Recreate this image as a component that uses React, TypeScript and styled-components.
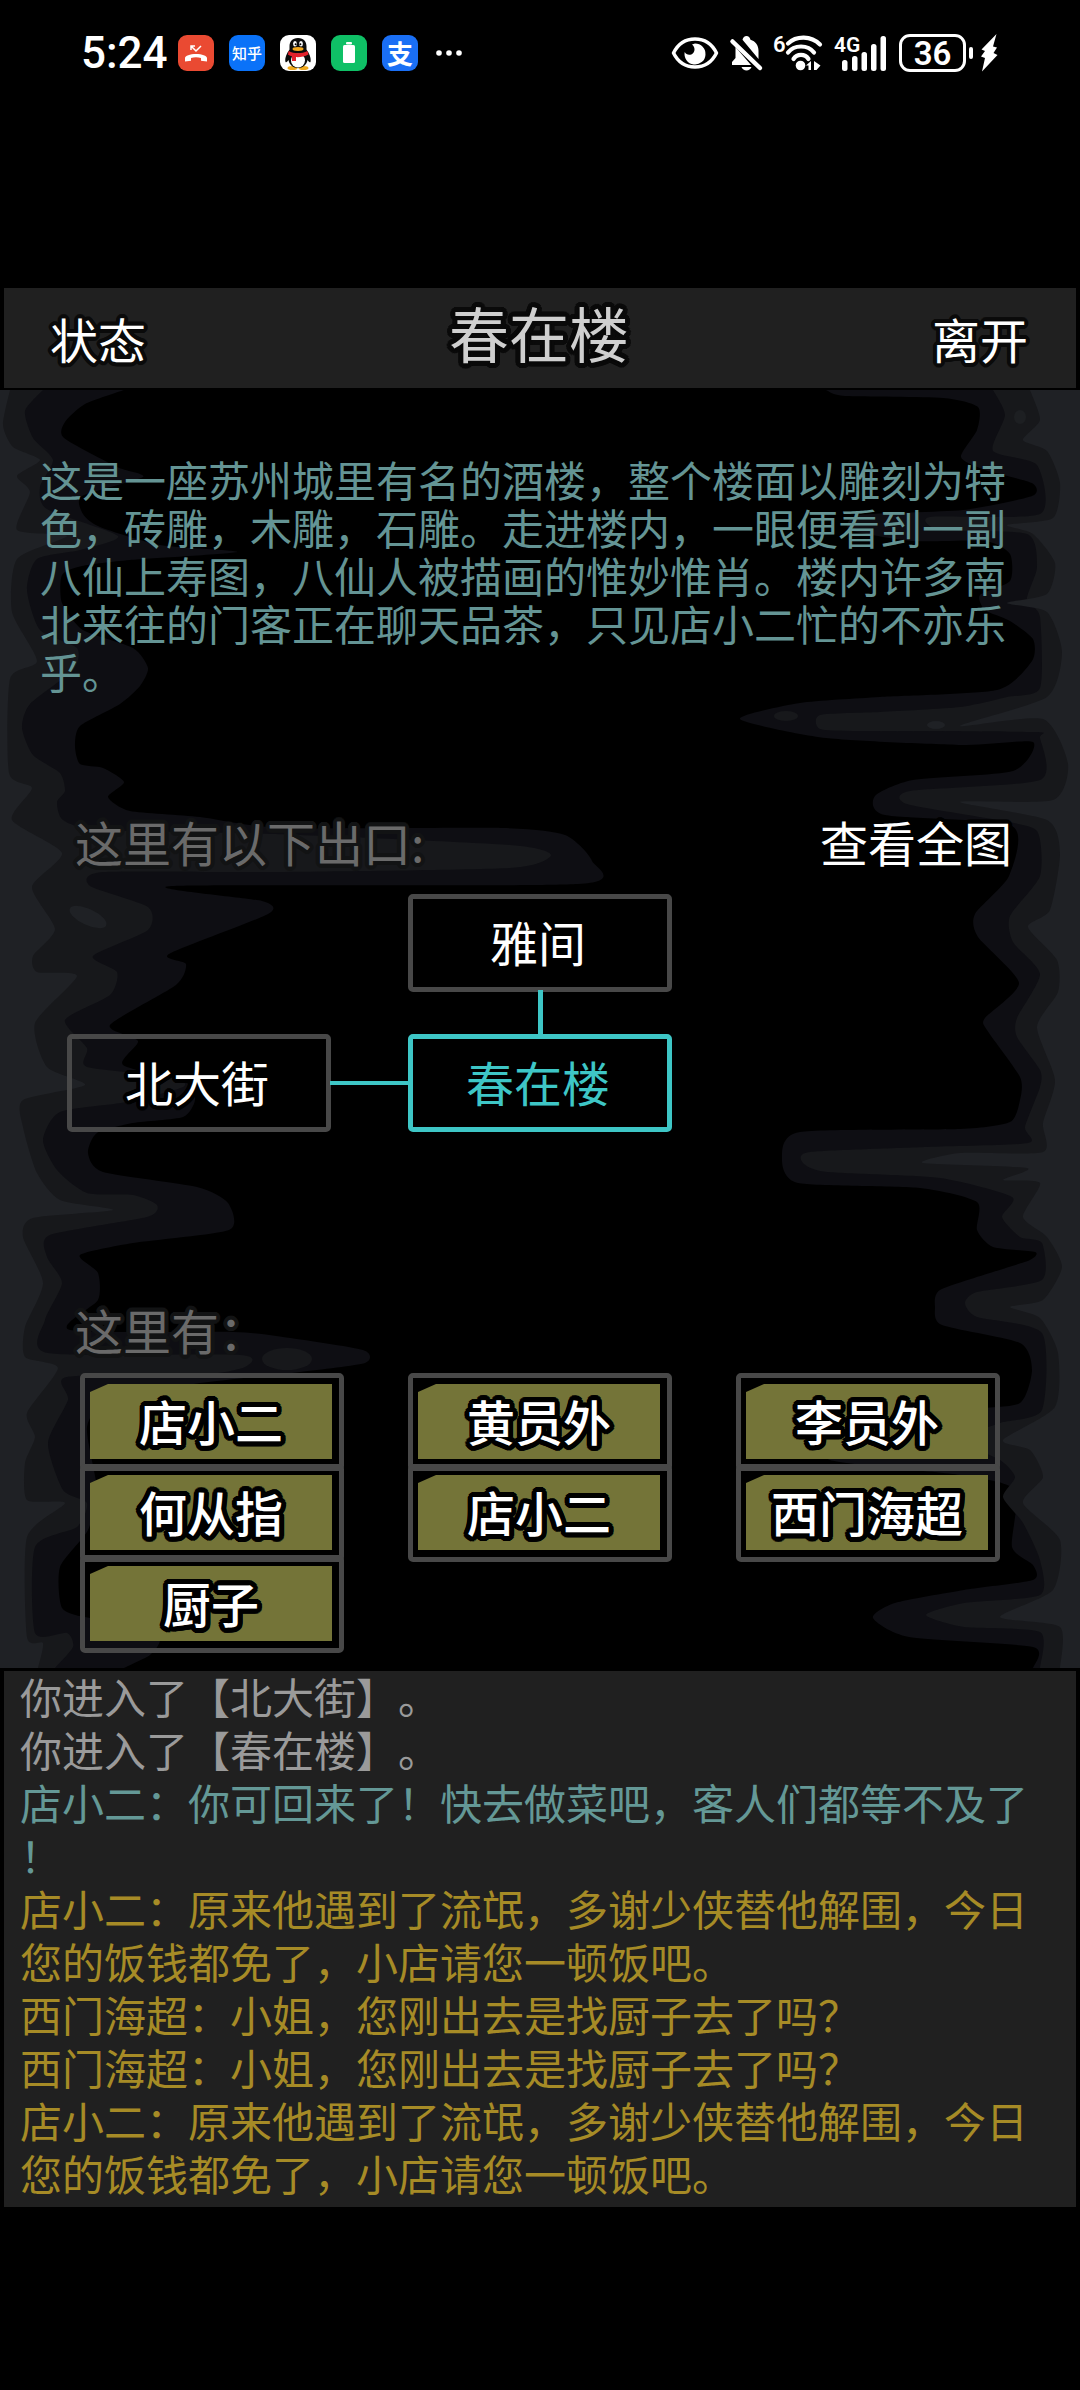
import React from 'react';
import styled, { createGlobalStyle, css } from 'styled-components';

const GlobalStyle = createGlobalStyle`
  *, *::before, *::after { box-sizing: border-box; }
  body {
    margin: 0;
    background: #000;
    color: #fff;
    font-family: 'Noto Sans CJK SC', sans-serif;
    text-spacing-trim: space-all;
  }
  button {
    margin: 0;
    padding: 0;
    border: 0;
    background: none;
    color: inherit;
    font: inherit;
    cursor: pointer;
  }
`;

const ring = (radius: number, colour: string) =>
  Array.from({ length: 20 }, (_, i) => {
    const a = (i / 20) * Math.PI * 2;
    return `${(Math.cos(a) * radius).toFixed(1)}px ${(Math.sin(a) * radius).toFixed(1)}px 0 ${colour}`;
  }).join(', ');

const outline = (colour: string, reach = 4) => css`
  text-shadow: ${ring(2, colour)}, ${ring(reach, colour)};
`;

const Screen = styled.div`
  min-height: 100vh;
  background: #000;
`;

/* ---------- status bar ---------- */

const StatusBar = styled.header`
  display: flex;
  align-items: center;
  justify-content: space-between;
  height: 106px;
  padding: 0 82px 0 81px;
  font-family: Roboto, sans-serif;
`;

const StatusGroup = styled.div<{ $gap: number }>`
  display: flex;
  align-items: center;
  gap: ${(p) => p.$gap}px;

  svg {
    overflow: visible;
  }
`;

const Clock = styled.time`
  width: 82px;
  font-size: 44px;
  font-weight: 500;
  line-height: 56px;
  white-space: nowrap;
`;

const AppBadge = styled.span<{ $bg: string }>`
  display: grid;
  place-items: center;
  width: 36px;
  height: 36px;
  border-radius: 9px;
  background: ${(p) => p.$bg};
  font-family: 'Noto Sans CJK SC', sans-serif;
  font-weight: 500;
  font-size: 15px;
  line-height: 36px;
`;

const BigBadge = styled(AppBadge)`
  font-size: 26px;
  font-weight: 700;
`;

const Battery = styled.span`
  display: flex;
  align-items: center;
  gap: 3px;
`;

const BatteryCell = styled.span`
  width: 67px;
  height: 38px;
  border: 3px solid #fff;
  border-radius: 11px;
  font-size: 33px;
  font-weight: 600;
  line-height: 33px;
  text-align: center;
`;

const BatteryTip = styled.span`
  width: 4px;
  height: 12px;
  margin-right: 4px;
  border-radius: 2px;
  background: #fff;
`;

const MissedCall = () => (
  <svg width="36" height="36" viewBox="0 0 36 36" fill="none">
    <path d="M7 25v-2c0-2 5-4 11-4s11 2 11 4v3.500l-6-.8v-2.600c-3-1-7-1-10 0v2.600l-6 .8z" fill="#fff" />
    <path d="M13 15v-4h4M13.500 11.500l4.500 4.500 5-5" stroke="#fff" strokeWidth="1.500" />
  </svg>
);

const Penguin = () => (
  <svg width="36" height="36" viewBox="0 0 36 36">
    <ellipse cx="12.500" cy="33" rx="5" ry="2" fill="#f0a81c" />
    <ellipse cx="23.500" cy="33" rx="5" ry="2" fill="#f0a81c" />
    <path d="M18 3c-6 0-8.500 4-8.500 8.500v3C7 18 4.500 23 5.500 27c.8 1 2-.5 3-2 .8 4.500 4.500 8 9.500 8s8.700-3.500 9.500-8c1 1.500 2.200 3 3 2 1-4-1.500-9-4-12.500v-3C26.500 7 24 3 18 3z" fill="#0b0b0b" />
    <ellipse cx="18" cy="25.500" rx="7" ry="7" fill="#fff" />
    <path d="M8.500 16c6 3 13 3 19 0l1 3.500c-4 2-8 2.800-12.500 2.600V26h-4v-4.500l-4-1.800z" fill="#e3202b" />
    <ellipse cx="15" cy="8.800" rx="1.900" ry="2.700" fill="#fff" />
    <ellipse cx="21" cy="8.800" rx="1.900" ry="2.700" fill="#fff" />
    <circle cx="15.600" cy="9.200" r="1" fill="#000" />
    <circle cx="20.400" cy="9.200" r="1" fill="#000" />
    <ellipse cx="18" cy="14" rx="5.500" ry="1.900" fill="#f5a81c" />
  </svg>
);

const BatteryApp = () => (
  <svg width="36" height="36" viewBox="0 0 36 36" fill="#fff">
    <rect x="15" y="7" width="6" height="2.500" rx="1" />
    <rect x="12" y="10" width="12" height="18" rx="1.500" />
  </svg>
);

const Dots = () => (
  <svg width="36" height="36" viewBox="0 0 36 36" fill="#fff">
    <circle cx="6" cy="18" r="2.800" />
    <circle cx="16" cy="18" r="2.800" />
    <circle cx="26" cy="18" r="2.800" />
  </svg>
);

const Eye = () => (
  <svg width="48" height="34" viewBox="0 0 48 34" fill="none">
    <path d="M2.500 17C7 8 15 3 24 3s17 5 21.500 14C41 26 33 31 24 31S7 26 2.500 17z" stroke="#fff" strokeWidth="3.500" strokeLinejoin="round" />
    <path d="M24 7.500a10.500 10.500 0 1 1-10.300 8.500c1 1.800 2.500 2.800 4.500 2.800 3 0 5.300-2.300 5.300-5.300 0-2-.9-3.700-2.500-4.900z" fill="#fff" />
  </svg>
);

const BellOff = () => (
  <svg width="33" height="36" viewBox="0 0 33 36">
    <path d="M12.500 4.800C13 2.500 14.500 1 16.500 1s3.500 1.500 4 3.800c5 1.500 8 5.500 8 11V24z" fill="#fff" />
    <path d="M5.500 12 21 30H2v-3l3.500-4z" fill="#fff" />
    <path d="M2.500 6.500 30 33" stroke="#fff" strokeWidth="4.500" strokeLinecap="round" />
    <path d="M11.500 32h10c-.8 2-2.800 3.500-5 3.500s-4.200-1.500-5-3.500z" fill="#fff" />
  </svg>
);

const Wifi = () => (
  <svg width="50" height="38" viewBox="0 0 50 38">
    <text x="-1" y="18" fontSize="22" fontWeight="600" fill="#fff">6</text>
    <g fill="none" stroke="#fff" strokeWidth="4.200" strokeLinecap="round">
      <path d="M14 9.500c8.500-8 23-8 32 1" />
      <path d="M14 18.500c6-8 20-8 26 0" />
      <path d="M19.500 25c3.500-5.500 11.500-5.500 15 0" />
    </g>
    <circle cx="26.500" cy="31.500" r="4.800" fill="#fff" />
    <path d="M37 27v9h-2.500v-4.500H32zM40 27l6.500 4.500L42.500 36H40z" fill="#fff" />
  </svg>
);

const Signal = () => (
  <svg width="53" height="38" viewBox="0 0 53 38">
    <text x="-1" y="18" fontSize="21" fontWeight="600" fill="#fff">4G</text>
    <g fill="#fff">
      <rect x="7" y="26" width="5.500" height="11" rx="2.500" />
      <rect x="17" y="22" width="5.500" height="15" rx="2.500" />
      <rect x="26.500" y="18" width="5.500" height="19" rx="2.500" />
      <rect x="36" y="10" width="5.500" height="27" rx="2.500" />
      <rect x="45.500" y="2" width="5.500" height="35" rx="2.500" />
    </g>
  </svg>
);

const Bolt = () => (
  <svg width="18" height="38" viewBox="0 0 18 38">
    <path d="M16.500 0 1.500 15.500 5 17 1 22.500l4 1.500L2 37.500 17.500 21l-4-2 3.500-5.500-4-1z" fill="#fff" />
  </svg>
);

/* ---------- title bar ---------- */

const TitleBar = styled.nav`
  display: grid;
  grid-template-columns: 1fr auto 1fr;
  align-items: center;
  height: 100px;
  margin: 182px 4px 2px;
  padding: 0 48px 0 46px;
  background: #202020;
`;

const TitleButton = styled.button<{ $end?: boolean }>`
  justify-self: ${(p) => (p.$end ? 'end' : 'start')};
  font-size: 48px;
  line-height: 64px;
  ${outline('#0a0a0a')}
`;

const Title = styled.h1`
  margin: 0;
  padding-bottom: 12px;
  color: #cfcfcf;
  font-family: 'AR PL UKai CN', KaiTi, STKaiti, 'Noto Sans CJK SC', sans-serif;
  font-size: 60px;
  font-weight: 400;
  line-height: 72px;
  ${outline('#0a0a0a', 5)}
`;

/* ---------- scene ---------- */

const Scene = styled.main`
  position: relative;
  padding: 65px 0 15px;
`;

const Backdrop = styled.svg`
  position: absolute;
  inset: 0;
  width: 100%;
  height: 100%;
`;

const Content = styled.div`
  position: relative;
`;

const Description = styled.p`
  margin: 0;
  padding: 0 60px 0 40px;
  color: #649494;
  font-size: 42px;
  line-height: 48px;
  line-break: anywhere;
`;

const SectionHead = styled.div<{ $space: number }>`
  display: flex;
  align-items: flex-start;
  justify-content: space-between;
  height: 60px;
  margin-top: ${(p) => p.$space}px;
  padding: 0 68px 0 75px;
  font-size: 48px;
  line-height: 54px;
`;

const SectionTitle = styled.h2`
  margin: 0;
  color: #6a6a6a;
  font: inherit;
  ${outline('#121314')}
`;

const MapButton = styled.button`
  ${outline('#000')}
`;

const ExitMap = styled.div`
  display: grid;
  grid-template-columns: 1fr 77px 1fr 77px 1fr;
  grid-template-rows: 98px 42px 98px;
  margin-top: 20px;
  padding: 0 67px;
`;

const Place = styled.button<{ $col: number; $row: number; $here?: boolean }>`
  grid-column: ${(p) => p.$col};
  grid-row: ${(p) => p.$row};
  padding: 0 4px 4px 0;
  border: 5px solid ${(p) => (p.$here ? '#3ec6c6' : '#484848')};
  border-radius: 5px;
  color: ${(p) => (p.$here ? '#3ec6c6' : '#fff')};
  font-size: 48px;
  line-height: 60px;
  ${outline('#000')}
`;

const Link = styled.span<{ $vertical?: boolean }>`
  place-self: center;
  background: #3ec6c6;
  ${(p) =>
    p.$vertical
      ? 'grid-column: 3; grid-row: 2; width: 5px; height: 46px;'
      : 'grid-column: 2; grid-row: 3; width: 80px; height: 4px;'}
`;

const People = styled.div`
  display: grid;
  grid-template-columns: repeat(3, 1fr);
  align-items: start;
  gap: 64px;
  margin-top: 11px;
  padding: 0 80px;
`;

const PeopleColumn = styled.div`
  display: flex;
  flex-direction: column;
`;

const Person = styled.button`
  height: 98px;
  padding: 6px 7px 7px 5px;
  border: 5px solid #484848;
  border-radius: 5px;

  & + & {
    margin-top: -7px;
  }
`;

const PersonName = styled.span`
  display: block;
  height: 75px;
  background: #747438;
  clip-path: polygon(18px 0, 100% 0, 100% 100%, 0 100%, 0 8px);
  font-size: 48px;
  font-weight: 500;
  line-height: 72px;
  ${outline('#000', 5)}
`;

/* ---------- message log ---------- */

const Log = styled.section`
  display: flex;
  flex-direction: column;
  margin: 3px 4px 0;
  padding: 0 16px 8px;
  background: #202020;
`;

const tones = { plain: '#9a9a9a', talk: '#649896', gold: '#a68b26' };
type Tone = keyof typeof tones;

const Message = styled.p<{ $tone: Tone }>`
  margin: 0;
  color: ${(p) => tones[p.$tone]};
  font-size: 42px;
  line-height: 53px;
  line-break: anywhere;

  &:first-child {
    margin-top: -2px;
  }
`;

/* ---------- cave wall drawing ---------- */

type Point = [number, number];

const parse = (s: string): Point[] => s.trim().split(/\s+/).map((p) => p.split(',').map(Number) as Point);

const wall = (source: string, edge: number) => {
  const pts = parse(source);
  let d = `M${edge},390 L${pts[0].join(',')}`;
  for (let i = 0; i < pts.length - 1; i++) {
    const a = pts[Math.max(0, i - 1)];
    const b = pts[i];
    const c = pts[i + 1];
    const e = pts[Math.min(pts.length - 1, i + 2)];
    const k = 9;
    d += ` C${b[0] + (c[0] - a[0]) / k},${b[1] + (c[1] - a[1]) / k} ${c[0] - (e[0] - b[0]) / k},${c[1] - (e[1] - b[1]) / k} ${c[0]},${c[1]}`;
  }
  return `${d} L${edge},1668 Z`;
};

const walls = [
  {
    fill: '#0e0e13',
    left: '124,390 85,404 65,422 64,438 117,467 143,477 82,496 83,514 100,527 160,545 237,552 130,560 82,566 62,575 62,603 83,630 133,648 148,668 140,686 120,704 80,726 75,746 80,764 103,768 124,782 108,797 130,811 200,817 282,828 503,828 565,835 592,861 578,884 172,886 262,901 268,914 169,954 186,964 176,985 110,1025 138,1041 123,1065 187,1083 195,1100 183,1117 133,1123 97,1133 88,1153 103,1172 197,1187 228,1203 229,1230 133,1243 80,1255 98,1273 98,1300 70,1330 233,1332 283,1337 363,1350 365,1363 300,1372 200,1383 110,1400 87,1427 97,1490 88,1530 60,1567 62,1608 90,1618 147,1622 160,1640 150,1655 124,1668',
    right: '826,390 845,396 943,398 978,407 977,430 961,457 985,470 1032,483 1032,496 963,510 860,515 850,530 913,541 985,541 1010,554 1010,581 980,595 985,610 1010,621 1033,639 1032,661 997,690 880,697 800,703 740,719 826,738 964,745 1033,742 1013,771 913,780 875,796 885,815 1012,826 1009,876 975,914 978,937 1019,983 985,1018 987,1030 1020,1077 1020,1100 1010,1122 960,1129 800,1132 782,1158 798,1183 920,1188 977,1202 977,1230 993,1247 1035,1252 1030,1260 993,1272 940,1290 935,1307 942,1325 1020,1343 1032,1370 1020,1403 970,1410 850,1435 830,1460 960,1475 1015,1490 1012,1547 1033,1565 1033,1580 964,1590 895,1603 873,1618 909,1637 1033,1647 1033,1668',
  },
  {
    fill: '#17181b',
    left: '43,390 25,411 33,438 53,460 40,487 47,509 118,536 80,550 37,559 27,590 40,630 77,648 73,670 30,704 22,728 33,755 60,773 65,791 57,802 63,820 100,830 275,834 510,845 551,855 510,868 275,872 103,872 90,886 148,907 148,930 93,956 117,972 110,995 65,1020 87,1048 87,1067 173,1077 183,1087 127,1102 60,1112 43,1140 57,1170 87,1193 133,1195 157,1205 147,1217 50,1235 47,1257 62,1283 45,1320 48,1353 240,1355 245,1367 200,1375 67,1377 68,1400 48,1443 63,1490 87,1503 77,1527 35,1547 35,1633 67,1633 73,1647 55,1668',
    right: '993,390 1005,415 993,451 1037,465 1040,514 930,517 940,530 1027,534 1037,567 1027,599 1040,617 1040,688 1007,697 960,707 880,712 820,715 820,729 861,731 1033,732 1040,738 1040,780 910,791 907,804 997,820 1037,831 1040,876 1010,916 1013,942 1040,974 1017,1018 1017,1037 1040,1070 1040,1087 1025,1127 1028,1143 927,1147 810,1152 803,1163 827,1172 940,1178 1012,1197 1002,1217 1020,1237 1042,1243 1042,1280 977,1292 965,1303 977,1317 1042,1333 1042,1410 1000,1423 960,1440 1000,1460 1015,1477 1003,1497 1023,1523 1040,1560 1040,1595 964,1603 926,1615 964,1627 1040,1632 1040,1668',
  },
  {
    fill: '#1f2125',
    left: '10,390 3,425 13,447 40,460 17,476 30,492 17,530 67,536 17,559 12,612 37,661 10,679 9,773 32,788 12,820 62,853 32,887 55,929 33,956 37,972 77,976 35,1023 47,1067 85,1085 23,1100 23,1127 37,1173 60,1200 113,1210 33,1218 23,1237 43,1283 25,1327 25,1357 58,1368 27,1413 35,1437 25,1463 27,1500 65,1503 27,1537 27,1637 43,1643 38,1668',
    right: '1030,390 1040,420 1023,440 1047,451 1060,483 1053,518 1007,525 1033,534 1055,563 1047,594 1007,603 1047,612 1062,652 1047,697 960,726 1043,719 1068,764 1053,800 960,802 1047,820 1060,853 1050,910 1028,927 1057,960 1058,992 1037,1027 1055,1080 1043,1123 1043,1152 960,1153 923,1163 1027,1168 1003,1180 1040,1183 1023,1217 1047,1237 1062,1267 1043,1300 1010,1307 1040,1318 1058,1353 1055,1407 1003,1440 1030,1450 1043,1477 1023,1503 1060,1540 1053,1590 1000,1617 1060,1627 1060,1668',
  },
];

const CaveWalls = () => (
  <Backdrop viewBox="0 390 1080 1278" preserveAspectRatio="none" aria-hidden="true">
    {walls.map((w) => (
      <g key={w.fill} fill={w.fill}>
        <path d={wall(w.left, 0)} />
        <path d={wall(w.right, 1080)} />
      </g>
    ))}
    <g fill="#17181b">
      <ellipse cx="287" cy="1359" rx="25" ry="11" />
      <ellipse cx="786" cy="716" rx="12" ry="5" />
    </g>
    <g fill="#1f2125">
      <ellipse cx="936" cy="725" rx="9" ry="4" />
      <ellipse cx="88" cy="917" rx="20" ry="8" transform="rotate(25 88 917)" />
    </g>
    <ellipse cx="1020" cy="417" rx="6" ry="7" fill="#1d1f22" />
  </Backdrop>
);

const people = [
  ['店小二', '何从指', '厨子'],
  ['黄员外', '店小二'],
  ['李员外', '西门海超'],
];

const messages: { tone: Tone; text: string }[] = [
  { tone: 'plain', text: '你进入了【北大街】。' },
  { tone: 'plain', text: '你进入了【春在楼】。' },
  { tone: 'talk', text: '店小二：你可回来了！快去做菜吧，客人们都等不及了！' },
  { tone: 'gold', text: '店小二：原来他遇到了流氓，多谢少侠替他解围，今日您的饭钱都免了，小店请您一顿饭吧。' },
  { tone: 'gold', text: '西门海超：小姐，您刚出去是找厨子去了吗？' },
  { tone: 'gold', text: '西门海超：小姐，您刚出去是找厨子去了吗？' },
  { tone: 'gold', text: '店小二：原来他遇到了流氓，多谢少侠替他解围，今日您的饭钱都免了，小店请您一顿饭吧。' },
];

export default function App() {
  return (
    <Screen lang="zh-CN">
      <GlobalStyle />
      <StatusBar>
        <StatusGroup $gap={15}>
          <Clock>5:24</Clock>
          <AppBadge $bg="#ea4a32"><MissedCall /></AppBadge>
          <AppBadge $bg="#0a72f8">知乎</AppBadge>
          <AppBadge $bg="#fff"><Penguin /></AppBadge>
          <AppBadge $bg="#0fc066"><BatteryApp /></AppBadge>
          <BigBadge $bg="#1a6ff5">支</BigBadge>
          <Dots />
        </StatusGroup>
        <StatusGroup $gap={11}>
          <Eye />
          <BellOff />
          <Wifi />
          <Signal />
          <Battery>
            <BatteryCell>36</BatteryCell>
            <BatteryTip />
            <Bolt />
          </Battery>
        </StatusGroup>
      </StatusBar>

      <TitleBar>
        <TitleButton type="button">状态</TitleButton>
        <Title>春在楼</Title>
        <TitleButton type="button" $end>离开</TitleButton>
      </TitleBar>

      <Scene>
        <CaveWalls />
        <Content>
          <Description>
            这是一座苏州城里有名的酒楼，整个楼面以雕刻为特色，砖雕，木雕，石雕。走进楼内，一眼便看到一副八仙上寿图，八仙人被描画的惟妙惟肖。楼内许多南北来往的门客正在聊天品茶，只见店小二忙的不亦乐乎。
          </Description>

          <SectionHead $space={119}>
            <SectionTitle>这里有以下出口:</SectionTitle>
            <MapButton type="button">查看全图</MapButton>
          </SectionHead>
          <ExitMap>
            <Place type="button" $col={3} $row={1}>雅间</Place>
            <Place type="button" $col={1} $row={3}>北大街</Place>
            <Place type="button" $col={3} $row={3} $here>春在楼</Place>
            <Link $vertical />
            <Link />
          </ExitMap>

          <SectionHead $space={170}>
            <SectionTitle>这里有：</SectionTitle>
          </SectionHead>
          <People>
            {people.map((column, i) => (
              <PeopleColumn key={i}>
                {column.map((name) => (
                  <Person key={name} type="button">
                    <PersonName>{name}</PersonName>
                  </Person>
                ))}
              </PeopleColumn>
            ))}
          </People>
        </Content>
      </Scene>

      <Log>
        {messages.map((m, i) => (
          <Message key={i} $tone={m.tone}>{m.text}</Message>
        ))}
      </Log>
    </Screen>
  );
}
